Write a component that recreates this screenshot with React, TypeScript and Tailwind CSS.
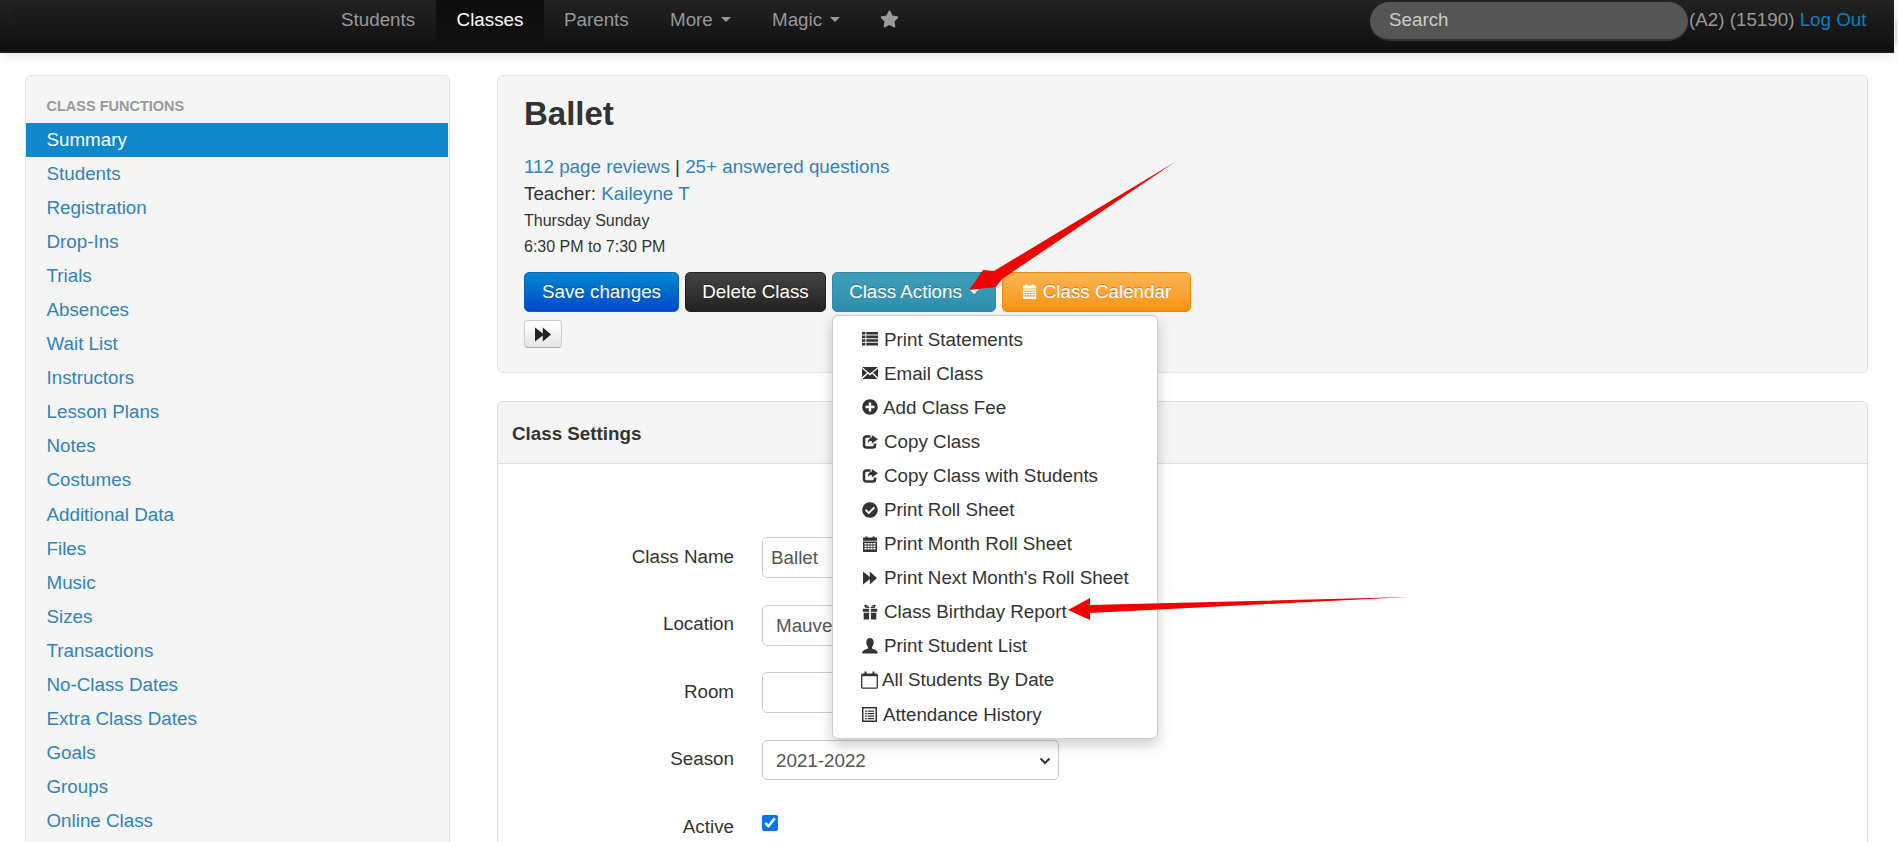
import { FaCheckCircle, FaPlusCircle, FaStar } from 'react-icons/fa';

const sideLinks = [
  'Students',
  'Registration',
  'Drop-Ins',
  'Trials',
  'Absences',
  'Wait List',
  'Instructors',
  'Lesson Plans',
  'Notes',
  'Costumes',
  'Additional Data',
  'Files',
  'Music',
  'Sizes',
  'Transactions',
  'No-Class Dates',
  'Extra Class Dates',
  'Goals',
  'Groups',
  'Online Class',
];

// bootstrap 2 style glyphs, these differ too much from what the icon packs have
const ThList = () => (
  <svg viewBox="0 0 16 16" fill="currentColor" className="w-[16px] h-[16px]">
    <path d="M0 1h3.4v2.6H0zM4.3 1H16v2.6H4.3zM0 4.6h3.4v2.6H0zM4.3 4.6H16v2.6H4.3zM0 8.2h3.4v2.6H0zM4.3 8.2H16v2.6H4.3zM0 11.8h3.4v2.6H0zM4.3 11.8H16v2.6H4.3z" />
  </svg>
);
const Envelope = () => (
  <svg viewBox="0 0 16 16" fill="currentColor" className="w-[16px] h-[16px]">
    <path d="M0 2h16L8 8.6zM0 3.6v8.6l5-4.5zM16 3.6v8.6l-5-4.5zM0.4 14l5.5-5.2L8 10.5l2.1-1.7 5.5 5.2z" />
  </svg>
);
const Share = () => (
  <svg viewBox="0 0 16 16" className="w-[16px] h-[16px]">
    <path d="M8.5 3.5H4.2A2.2 2.2 0 0 0 2 5.7v6.6a2.2 2.2 0 0 0 2.2 2.2h6.6a2.2 2.2 0 0 0 2.2-2.2V10.5" fill="none" stroke="currentColor" strokeWidth="2.6" />
    <path d="M9.8 2 16 6.2 9.8 10.4V8C8 8 6.6 8.600 5.800 10.200 5.800 7.200 7.400 4.800 9.800 4.600z" fill="currentColor" />
  </svg>
);
const Calendar = ({ className }: { className: string }) => (
  <svg viewBox="0 0 16 16" fill="currentColor" className={className}>
    <path d="M1 1.500h2.500V.5h2v1h5v-1h2v1H15v3.300H1z" />
    <path fillRule="evenodd" d="M1 5.500h14V16H1zM2.500 7v1.500h2.200V7zM5.500 7v1.500h2.100V7zM8.400 7v1.500h2.100V7zM11.300 7v1.500h2.200V7zM2.500 9.400v1.500h2.200V9.400zM5.500 9.400v1.500h2.100V9.400zM8.400 9.400v1.500h2.100V9.400zM11.300 9.400v1.500h2.200V9.400zM2.500 11.800v1.700h2.200v-1.700zM5.500 11.800v1.700h2.100v-1.700zM8.400 11.800v1.700h2.100v-1.700zM11.300 11.800v1.700h2.200v-1.700z" />
  </svg>
);
const Forward = ({ className }: { className: string }) => (
  <svg viewBox="0 0 14 14" fill="currentColor" preserveAspectRatio="none" className={className}>
    <polygon points="0,0.500 6.800,6 6.800,0.500 14,7 6.800,13.500 6.800,8 0,13.500" />
  </svg>
);
const Gift = () => (
  <svg viewBox="0 0 16 16" fill="currentColor" className="w-[16px] h-[16px]">
    <path fillRule="evenodd" d="M7.600 4C6 1.200 4.300.2 3 .8 1.800 1.400 2.200 3.400 4 4zM4.600 2.200c.8.100 1.300.600 1.500 1-.8 0-1.700-.3-2-.6-.3-.4 0-.5.500-.4z" />
    <path fillRule="evenodd" d="M8.400 4C10 1.200 11.700.2 13 .8c1.200.6.800 2.600-1 3.200zM11.400 2.200c-.8.100-1.300.600-1.500 1 .8 0 1.700-.3 2-.6.300-.4 0-.5-.5-.4z" />
    <path d="M.8 4.700h6.300v3.100H.8zM8.900 4.700h6.300v3.100H8.900zM1.700 8.800h5.400V15.500H1.700zM8.900 8.800h5.400V15.500H8.900z" />
  </svg>
);
const User = () => (
  <svg viewBox="0 0 16 16" fill="currentColor" className="w-[16px] h-[16px]">
    <path d="M8 0c2.300 0 3.700 1.800 3.700 4.300 0 2-.8 3.800-1.700 4.700v1.400c2 1 5.600 1.500 5.800 4.600v.5H.2V15c.2-3.100 3.800-3.600 5.800-4.600V9C5.100 8.100 4.300 6.300 4.300 4.300 4.300 1.800 5.700 0 8 0z" />
  </svg>
);
const CalendarOutline = () => (
  <svg viewBox="0 0 17 18" className="w-[17px] h-[18px]">
    <rect x="0.700" y="3.200" width="15.600" height="14" rx="1.200" fill="none" stroke="currentColor" strokeWidth="1.300" />
    <path d="M1 3h15v2.200H1z" fill="currentColor" />
    <path d="M3.500.500h2v4h-2zM11.500.500h2v4h-2z" fill="currentColor" />
  </svg>
);
const ListAlt = () => (
  <svg viewBox="0 0 16 16" className="w-[15px] h-[15px]">
    <rect x="0.800" y="0.800" width="14.400" height="14.400" fill="none" stroke="currentColor" strokeWidth="1.600" />
    <path d="M3.200 3.600h2v1.500h-2zM6 3.600h7v1.500H6zM3.200 6.300h2v1.500h-2zM6 6.300h7v1.500H6zM3.200 9h2v1.500h-2zM6 9h7v1.500H6zM3.200 11.600h2v1.500h-2zM6 11.600h7v1.500H6z" fill="currentColor" />
  </svg>
);

const menuItems = [
  { label: 'Print Statements', icon: <ThList />, gap: 'gap-[6px]' },
  { label: 'Email Class', icon: <Envelope />, gap: 'gap-[6px]' },
  { label: 'Add Class Fee', icon: <FaPlusCircle className="w-[16px] h-[16px]" />, gap: 'gap-[5px]' },
  { label: 'Copy Class', icon: <Share />, gap: 'gap-[6px]' },
  { label: 'Copy Class with Students', icon: <Share />, gap: 'gap-[6px]' },
  { label: 'Print Roll Sheet', icon: <FaCheckCircle className="w-[16px] h-[16px]" />, gap: 'gap-[6px]' },
  { label: 'Print Month Roll Sheet', icon: <Calendar className="w-[16px] h-[16px]" />, gap: 'gap-[6px]' },
  { label: "Print Next Month's Roll Sheet", icon: <Forward className="w-[14px] h-[14px]" />, gap: 'gap-[6px]' },
  { label: 'Class Birthday Report', icon: <Gift />, gap: 'gap-[6px]' },
  { label: 'Print Student List', icon: <User />, gap: 'gap-[6px]' },
  { label: 'All Students By Date', icon: <CalendarOutline />, gap: 'gap-[4px]' },
  { label: 'Attendance History', icon: <ListAlt />, gap: 'gap-[5px]' },
];

const formRows = [
  { label: 'Class Name', value: 'Ballet', pad: 'pl-[8px]', labelPad: 'pt-[6px]' },
  { label: 'Location', value: 'Mauve', pad: 'pl-[13px]', labelPad: 'pt-[5px]' },
  { label: 'Room', value: '', pad: 'pl-[13px]', labelPad: 'pt-[6px]' },
];

const Caret = ({ className }: { className: string }) => (
  <span className={`inline-block w-0 h-0 border-x-[5px] border-x-transparent border-t-[5px] ${className}`} />
);

const App = () => {
  return (
    <div className="relative w-[1898px] h-[842px] overflow-hidden bg-white text-[18.8px] leading-[27px] text-[#333] font-['Liberation_Sans',Arial,sans-serif]">
      <nav className="flex items-start w-[1894px] h-[53px] bg-gradient-to-b from-[#222222] to-[#0f0f0f] border-b border-[#222] shadow-[0_2px_10px_rgba(0,0,0,0.12)] text-[#999]">
        <div className="w-[309px] h-[34px] mt-[5px] ml-[12px] bg-gradient-to-b from-[#1d1d1d] to-[#151515] shrink-0" />
        <a className="ml-[20px] pt-[6px] w-[95px]">Students</a>
        <a className="flex justify-center w-[108px] h-[47px] pt-[6px] bg-gradient-to-b from-[#0c0c0c] to-[#111] text-white">Classes</a>
        <a className="ml-[20px] w-[106px] pt-[6px]">Parents</a>
        <a className="flex items-center gap-[8px] w-[102px] h-[39px]">
          More <Caret className="border-t-[#999]" />
        </a>
        <a className="flex items-center gap-[8px] w-[108px] h-[39px]">
          Magic <Caret className="border-t-[#999]" />
        </a>
        <FaStar className="w-[19px] h-[18px] mt-[10px]" />
        <div className="flex-1" />
        <div className="w-[318px] h-[39px] mt-[2px] pl-[19px] pb-[2px] flex items-center rounded-[20px] bg-[#555] border-b-2 border-[#333] text-[#ccc] shrink-0">
          Search
        </div>
        <p className="ml-[1px] mr-[27.5px] pt-[6px]">
          (A2) (15190) <a className="text-[#0e7fc2]">Log Out</a>
        </p>
      </nav>
      <div className="absolute right-[1px] top-[20px] w-[2px] h-[24px] bg-[#ddd]" />

      <div className="flex items-start gap-[47px] pl-[25px] pt-[22px]">
        <aside className="w-[425px] shrink-0 h-[800px] pt-[13px] bg-[#f5f5f5] border border-[#e3e3e3] rounded-[5px]">
          <p className="pl-[20.5px] h-[34px] text-[14.5px] leading-[34px] font-bold text-[#999]">CLASS FUNCTIONS</p>
          <a className="block mr-[1px] h-[34.05px] pl-[20.5px] leading-[33px] bg-[#0f87c9] text-white">Summary</a>
          {sideLinks.map((link) => (
            <a key={link} className="block h-[34.05px] pl-[20.5px] leading-[33px] text-[#3183b8]">
              {link}
            </a>
          ))}
        </aside>

        <main className="w-[1371px] shrink-0">
          <section className="h-[298px] pt-[20px] pl-[26px] bg-[#f5f5f5] border border-[#e3e3e3] rounded-[5px]">
            <h1 className="text-[33px] leading-[36px] font-bold">Ballet</h1>
            <p className="mt-[22px] leading-[26px]">
              <a className="text-[#3183b8]">112 page reviews</a> | <a className="text-[#3183b8]">25+ answered questions</a>
            </p>
            <p className="leading-[27px]">
              Teacher: <a className="text-[#3183b8]">Kaileyne T</a>
            </p>
            <p className="text-[16px] leading-[27px]">Thursday Sunday</p>
            <p className="text-[16px] leading-[25px]">6:30 PM to 7:30 PM</p>
            <div className="flex gap-[6px] mt-[13px]">
              <button className="w-[155px] h-[40px] pb-[2px] rounded-[5px] text-white [text-shadow:0_-1px_0_rgba(0,0,0,0.25)] bg-gradient-to-b from-[#0088cc] to-[#0044cc] border border-[#0a5fc0]">
                Save changes
              </button>
              <button className="w-[141px] h-[40px] pb-[2px] rounded-[5px] text-white [text-shadow:0_-1px_0_rgba(0,0,0,0.25)] bg-gradient-to-b from-[#444] to-[#222] border border-[#222]">
                Delete Class
              </button>
              <div className="relative">
                <button className="flex items-center justify-center gap-[7px] w-[164px] h-[40px] pb-[2px] rounded-[5px] text-white [text-shadow:0_-1px_0_rgba(0,0,0,0.25)] bg-gradient-to-b from-[#3f9db9] to-[#2f8fab] border border-[#2f8ba8]">
                  Class Actions <Caret className="border-t-white" />
                </button>
                <div className="absolute z-10 left-0 top-[43px] w-[326px] h-[424px] pt-[6px] pl-[28px] bg-white rounded-[6px] border border-[#ccc] shadow-[0_6px_14px_rgba(0,0,0,0.2)]">
                  {menuItems.map((item) => (
                    <div key={item.label} className={`flex items-center h-[34.1px] whitespace-nowrap ${item.gap} text-[#333]`}>
                      <span className="flex justify-center w-[17px]">{item.icon}</span>
                      {item.label}
                    </div>
                  ))}
                </div>
              </div>
              <button className="flex items-center justify-center gap-[6px] w-[189px] h-[40px] pb-[2px] rounded-[5px] text-white [text-shadow:0_-1px_0_rgba(0,0,0,0.25)] bg-gradient-to-b from-[#fbb450] to-[#f89406] border border-[#e78b0a]">
                <Calendar className="w-[15px] h-[15px]" />
                Class Calendar
              </button>
            </div>
            <button className="flex items-center justify-center w-[38px] h-[28px] mt-[8px] rounded-[4px] bg-gradient-to-b from-white to-[#e6e6e6] border border-[#ccc] border-b-[#aaa] text-[#222]">
              <Forward className="w-[16px] h-[15px]" />
            </button>
          </section>

          <section className="mt-[28px] h-[500px] bg-white border border-[#ddd] rounded-[5px]">
            <div className="h-[62px] pl-[14px] bg-[#f5f5f5] border-b border-[#ddd] font-bold leading-[63px] rounded-t-[5px]">
              Class Settings
            </div>
            <div className="grid grid-cols-[222px_297px] items-start gap-x-[28px] pt-[73px] pl-[14px]">
              {formRows.map((row) => (
                <div key={row.label} className="contents">
                  <label className={`h-[67.7px] ${row.labelPad} text-right`}>{row.label}</label>
                  <div className={`h-[41px] ${row.pad} flex items-center bg-white border border-[#ccc] rounded-[5px] text-[#555]`}>
                    {row.value}
                  </div>
                </div>
              ))}
              <label className="h-[67.7px] pt-[5px] text-right">Season</label>
              <div className="relative h-[40px] pl-[13px] flex items-center bg-white border border-[#ccc] rounded-[5px] text-[#555]">
                2021-2022
                <svg viewBox="0 0 12 8" className="absolute right-[7px] top-[16px] w-[12px] h-[8px]">
                  <path d="M1.5 1.5 6 6l4.5-4.5" fill="none" stroke="#333" strokeWidth="2" />
                </svg>
              </div>
              <label className="h-[40px] pt-[5px] text-right">Active</label>
              <input type="checkbox" defaultChecked className="w-[16px] h-[16px] mt-[7px] accent-[#0075ff]" />
            </div>
          </section>
        </main>
      </div>

      {/* red annotation arrows */}
      <svg className="absolute inset-0 z-20 pointer-events-none" width="1898" height="842">
        <polygon points="1175,162 994,271 983,270 969,290 996,287 1002,279" fill="#f00000" />
        <polygon points="1409,597 1090,605 1090,598 1068,610 1090,620 1090,613" fill="#f00000" />
      </svg>
    </div>
  );
};

export default App;
